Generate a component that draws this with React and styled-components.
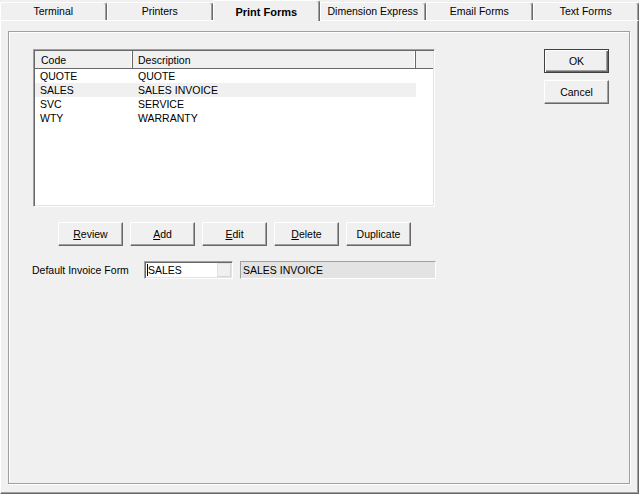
import React from 'react';
import styled, { createGlobalStyle } from 'styled-components';

const Global = createGlobalStyle`
  html, body {
    margin: 0;
    padding: 0;
    background: #f0f0f0;
  }
  body {
    font-family: "Liberation Sans", Arial, sans-serif;
    font-size: 10.5px;
    color: #000;
  }
  #root {
    width: 639px;
    height: 494px;
  }
`;

const Window = styled.div`
  width: 639px;
  height: 494px;
  display: flex;
  flex-direction: column;
  background: #f0f0f0;
  overflow: hidden;
`;

const TabBar = styled.div`
  display: flex;
  height: 20px;
  flex: none;
  align-items: flex-end;
`;

const Tab = styled.div`
  flex: 1;
  box-sizing: border-box;
  height: ${(p) => (p.$active ? '21px' : '18px')};
  margin-bottom: ${(p) => (p.$active ? '-1px' : '0')};
  position: relative;
  z-index: ${(p) => (p.$active ? 2 : 1)};
  background: #f0f0f0;
  border-top: 1px solid #fff;
  border-left: 1px solid #fff;
  border-right: 1px solid #696969;
  border-radius: 2px 3px 0 0;
  box-shadow: inset -1px 0 0 #a0a0a0;
  display: flex;
  align-items: center;
  justify-content: center;
  padding-top: ${(p) => (p.$active ? '2px' : '0')};
  padding-bottom: ${(p) => (p.$active ? '0' : '2px')};
  font-size: ${(p) => (p.$active ? '11px' : '10.5px')};
  font-weight: ${(p) => (p.$active ? 'bold' : 'normal')};
  white-space: nowrap;
`;

const Panel = styled.div`
  flex: 1;
  box-sizing: border-box;
  border-top: 1px solid #fff;
  border-left: 1px solid #fff;
  border-right: 1px solid #696969;
  border-bottom: 1px solid #696969;
  box-shadow: inset -1px -1px 0 #a0a0a0;
  padding: 10px 8px 9px 7px;
  display: flex;
`;

const Frame = styled.div`
  flex: 1;
  box-sizing: border-box;
  border: 1px solid #a0a0a0;
  box-shadow: inset 1px 1px 0 #fff, 1px 1px 0 #fff;
  padding: 17px 20px 0 23px;
  display: flex;
  justify-content: space-between;
  align-items: flex-start;
`;

const MainColumn = styled.div`
  display: flex;
  flex-direction: column;
  width: 404px;
`;

const List = styled.div`
  box-sizing: border-box;
  margin-left: 1px;
  width: 402px;
  height: 158px;
  background: #fff;
  border: 1px solid;
  border-color: #a0a0a0 #fff #fff #a0a0a0;
  box-shadow: inset 1px 1px 0 #696969, inset -1px -1px 0 #e3e3e3;
  padding: 1px 1px 0 1px;
`;

const HeaderRow = styled.div`
  display: grid;
  grid-template-columns: 97px 283px 1fr;
  height: 17px;
  background: #f0f0f0;
  border-bottom: 1px solid #696969;
`;

const HeaderCell = styled.div`
  display: flex;
  align-items: center;
  padding-left: 6px;
  border-right: ${(p) => (p.$last ? 'none' : '1px solid #fff')};
  box-shadow: ${(p) => (p.$last ? 'none' : '1px 0 0 #696969')};
  position: relative;
`;

const Row = styled.div`
  display: grid;
  grid-template-columns: 97px 284px;
  width: 381px;
  height: 14px;
  background: ${(p) => (p.$hot ? '#f0f0f0' : 'transparent')};
`;

const Cell = styled.div`
  display: flex;
  align-items: center;
  padding-left: ${(p) => (p.$pad || 5)}px;
  white-space: nowrap;
`;

const ButtonRow = styled.div`
  display: flex;
  gap: 7px;
  padding-left: 26px;
  margin-top: 15px;
`;

const Button = styled.button`
  box-sizing: border-box;
  width: 65px;
  height: 24px;
  padding: 0;
  background: #f0f0f0;
  font-family: inherit;
  font-size: 10.5px;
  color: #000;
  border: 1px solid;
  border-color: ${(p) => (p.$default ? '#404040' : '#fff #696969 #696969 #fff')};
  box-shadow: ${(p) =>
    p.$default
      ? 'inset 1px 1px 0 #fff, inset -1px -1px 0 #696969, inset -2px -2px 0 #a0a0a0'
      : 'inset -1px -1px 0 #a0a0a0'};
  u {
    text-decoration: underline;
    text-underline-offset: 1px;
  }
`;

const FieldRow = styled.div`
  display: flex;
  align-items: center;
  margin-top: 15px;
  height: 18px;
`;

const Label = styled.span`
  width: 112px;
  white-space: nowrap;
`;

const Combo = styled.div`
  box-sizing: border-box;
  width: 89px;
  height: 18px;
  background: #fff;
  border: 1px solid;
  border-color: #a0a0a0 #fff #fff #a0a0a0;
  box-shadow: inset 1px 1px 0 #696969, inset -1px -1px 0 #e3e3e3;
  display: flex;
  align-items: center;
  padding: 1px 1px 1px 2px;
`;

const Caret = styled.span`
  width: 1px;
  height: 12px;
  background: #000;
`;

const ComboText = styled.span`
  flex: 1;
`;

const DropButton = styled.span`
  box-sizing: border-box;
  width: 14px;
  height: 14px;
  background: #f0f0f0;
  border: 1px solid #e3e3e3;
  border-right-color: #d6d6d6;
  border-bottom-color: #d6d6d6;
`;

const ReadOnly = styled.div`
  box-sizing: border-box;
  margin-left: 7px;
  width: 196px;
  height: 18px;
  background: #e3e3e3;
  border: 1px solid;
  border-color: #a0a0a0 #fff #fff #a0a0a0;
  display: flex;
  align-items: center;
  padding-left: 2px;
`;

const SideColumn = styled.div`
  display: flex;
  flex-direction: column;
  gap: 7px;
`;

const forms = [
  { code: 'QUOTE', desc: 'QUOTE' },
  { code: 'SALES', desc: 'SALES INVOICE', hot: true },
  { code: 'SVC', desc: 'SERVICE' },
  { code: 'WTY', desc: 'WARRANTY' },
];

const tabs = ['Terminal', 'Printers', 'Print Forms', 'Dimension Express', 'Email Forms', 'Text Forms'];

export default function App() {
  return (
    <Window>
      <Global />
      <TabBar>
        {tabs.map((t) => (
          <Tab key={t} $active={t === 'Print Forms'}>
            {t}
          </Tab>
        ))}
      </TabBar>
      <Panel>
        <Frame>
          <MainColumn>
            <List>
              <HeaderRow>
                <HeaderCell>Code</HeaderCell>
                <HeaderCell>Description</HeaderCell>
                <HeaderCell $last />
              </HeaderRow>
              {forms.map((f) => (
                <Row key={f.code} $hot={f.hot}>
                  <Cell>{f.code}</Cell>
                  <Cell $pad={6}>{f.desc}</Cell>
                </Row>
              ))}
            </List>
            <ButtonRow>
              <Button><u>R</u>eview</Button>
              <Button><u>A</u>dd</Button>
              <Button><u>E</u>dit</Button>
              <Button><u>D</u>elete</Button>
              <Button>Duplicate</Button>
            </ButtonRow>
            <FieldRow>
              <Label>Default Invoice Form</Label>
              <Combo>
                <Caret />
                <ComboText>SALES</ComboText>
                <DropButton />
              </Combo>
              <ReadOnly>SALES INVOICE</ReadOnly>
            </FieldRow>
          </MainColumn>
          <SideColumn>
            <Button $default>OK</Button>
            <Button>Cancel</Button>
          </SideColumn>
        </Frame>
      </Panel>
    </Window>
  );
}
